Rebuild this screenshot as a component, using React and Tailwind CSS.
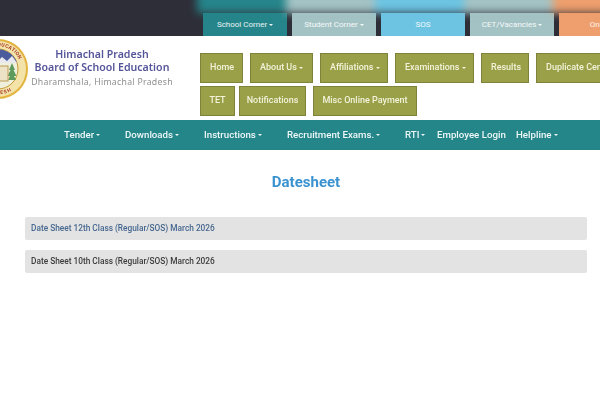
import React from 'react';

const tabs = [
  { label: 'School Corner', caret: true, bg: 'bg-[#25858a]' },
  { label: 'Student Corner', caret: true, bg: 'bg-[#a3c2c3]' },
  { label: 'SOS', caret: false, bg: 'bg-[#6cc4e2]' },
  { label: 'CET/Vacancies', caret: true, bg: 'bg-[#a3c2c3]' },
  { label: 'Online', caret: false, bg: 'bg-[#ee9f6d]' },
];

const menuOne = [
  { label: 'Home', w: 'w-[43px]' },
  { label: 'About Us', caret: true, w: 'w-[63px]' },
  { label: 'Affiliations', caret: true, w: 'w-[68px]' },
  { label: 'Examinations', caret: true, w: 'w-[79px]' },
  { label: 'Results', w: 'w-[48px]' },
  { label: 'Duplicate Certificate', w: 'w-[110px]' },
];

const menuTwo = [
  { label: 'TET', w: 'w-[35px]' },
  { label: 'Notifications', w: 'w-[67px]' },
  { label: 'Misc Online Payment', w: 'w-[104px]' },
];

const tealLinks = [
  { label: 'Tender', caret: true, w: 'w-[61px]' },
  { label: 'Downloads', caret: true, w: 'w-[79px]' },
  { label: 'Instructions', caret: true, w: 'w-[83px]' },
  { label: 'Recruitment Exams.', caret: true, w: 'w-[118px]' },
  { label: 'RTI', caret: true, w: 'w-[32px]' },
  { label: 'Employee Login', w: 'w-[79px]' },
  { label: 'Helpline', caret: true, w: 'w-[41px]' },
];

function Caret() {
  return <span className="inline-block ml-[2px] align-middle border-x-[2.5px] border-t-[2.5px] border-x-transparent border-t-current" />;
}

function Logo() {
  return (
    <svg width="60" height="60" viewBox="0 0 60 60" className="shrink-0 -ml-[32px]">
      <defs>
        <path id="logo-top" d="M7 30a23 23 0 0 1 46 0" />
        <path id="logo-bottom" d="M9 36a22 22 0 0 0 42 0" />
      </defs>
      <circle cx="30" cy="30" r="30" fill="#e2b33f" />
      <circle cx="30" cy="30" r="28" fill="#f3e3a8" />
      <text fontSize="5" fontWeight="700" fill="#a83a2a" fontFamily="Roboto, sans-serif" letterSpacing="0.3">
        <textPath href="#logo-top" startOffset="50%" textAnchor="middle">SCHOOL EDUCATION</textPath>
      </text>
      <text fontSize="5" fontWeight="700" fill="#a83a2a" fontFamily="Roboto, sans-serif" letterSpacing="0.3">
        <textPath href="#logo-bottom" startOffset="50%" textAnchor="middle" dominantBaseline="hanging">PRADESH</textPath>
      </text>
      <circle cx="30" cy="30" r="20" fill="#eef0dc" stroke="#c79a35" />
      <path d="M11 24a20 20 0 0 1 38 0z" fill="#4a5c9c" />
      <path d="M28 24l6-6 5 4 5-5 5 7z" fill="#e8e8ee" />
      <path d="M44 24l-3 7h1.5l-3 6h2.5l-2 4h8l-2-4h2.5l-3-6h1.5z" fill="#5d9a5c" />
      <rect x="20" y="27" width="20" height="15" fill="#ece3c6" stroke="#bd9a55" />
    </svg>
  );
}

export default function App() {
  return (
    <div className="w-[600px] h-[400px] overflow-hidden bg-white font-['Roboto',sans-serif]">
      <div className="blur-[0.4px]">
        <div className="h-[36px] bg-[#2e2e38] overflow-hidden flex flex-col">
          <div className="h-[28px] -mt-[15px] pl-[197px] flex blur-[4px] shrink-0">
            {tabs.map((t) => (
              <div key={t.label} className={`${t.bg} w-[89px] shrink-0`} />
            ))}
          </div>
          <div className="h-[23px] pl-[203px] flex gap-[5px] shrink-0 bg-[#2e2e38]">
            {tabs.map((t) => (
              <div key={t.label} className={`${t.bg} w-[84px] shrink-0 flex items-center justify-center text-[8px] text-white/90 whitespace-nowrap`}>
                {t.label}
                {t.caret && <Caret />}
              </div>
            ))}
          </div>
        </div>

        <div className="h-[84px] flex items-start bg-white">
          <div className="pt-[3px]"><Logo /></div>
          <div className="w-[148px] pt-[12px] text-center font-['Noto_Sans',sans-serif] shrink-0">
            <div className="text-[10.6px] leading-[13px] font-semibold text-[#55559a]">Himachal Pradesh</div>
            <div className="text-[10.6px] leading-[13px] font-semibold text-[#55559a]">Board of School Education</div>
            <div className="text-[8.7px] leading-[16px] tracking-[0.3px] text-[#8f8f8f] whitespace-nowrap">Dharamshala, Himachal Pradesh</div>
          </div>
          <div className="ml-[24px] pt-[17px] flex flex-col gap-[3px]">
            <div className="flex gap-[7px]">
              {menuOne.map((m) => (
                <div key={m.label} className={`${m.w} h-[30px] shrink-0 bg-[#9aa047] border border-[#7f8238] flex items-center justify-start whitespace-nowrap overflow-hidden pl-[9px] text-[9px] font-medium text-[#f3f3dc]`}>
                  {m.label}
                  {m.caret && <Caret />}
                </div>
              ))}
            </div>
            <div className="flex gap-[4px]">
              {menuTwo.map((m, i) => (
                <div key={m.label} className={`${m.w} ${i === 2 ? 'ml-[3px]' : ''} h-[30px] shrink-0 bg-[#9aa047] border border-[#7f8238] flex items-center justify-center whitespace-nowrap text-[9px] font-medium text-[#f3f3dc]`}>
                  {m.label}
                </div>
              ))}
            </div>
          </div>
        </div>

        <div className="h-[30px] bg-[#25868a] flex items-center pl-[64px] text-[9.7px] font-medium text-[#eef7f7]">
          {tealLinks.map((l) => (
            <div key={l.label} className={`${l.w} shrink-0 whitespace-nowrap`}>
              {l.label}
              {l.caret && <Caret />}
            </div>
          ))}
        </div>

        <h1 className="mt-[24px] text-center pl-[12px] text-[15px] leading-[17px] font-bold text-[#3a93d0]">Datesheet</h1>

        <div className="mt-[26px] ml-[25px] mr-[13px] flex flex-col gap-[10px]">
          <div className="h-[23px] bg-[#e3e3e3] rounded-[2px] flex items-center pl-[6px] text-[8.3px] font-medium text-[#46678f]">
            Date Sheet 12th Class (Regular/SOS) March 2026
          </div>
          <div className="h-[23px] bg-[#e3e3e3] rounded-[2px] flex items-center pl-[6px] text-[8.3px] font-medium text-[#3c3c3c]">
            Date Sheet 10th Class (Regular/SOS) March 2026
          </div>
        </div>
      </div>
    </div>
  );
}
